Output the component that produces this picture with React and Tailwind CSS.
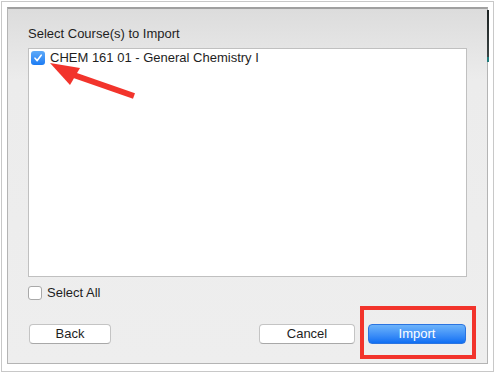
const COURSES = [{ id: 1, label: 'CHEM 161 01 - General Chemistry I', checked: true }];

function Check({ checked }) {
  if (checked) {
    return (
      <span className="flex h-[14px] w-[14px] items-center justify-center rounded-[3px] bg-gradient-to-b from-[#5eaaf8] to-[#1a7cf4]">
        <svg width="10" height="10" viewBox="0 0 10 10">
          <path d="M2 5.2 L4.2 7.6 L8.2 2.2" fill="none" stroke="#fff" strokeWidth="1.6" strokeLinecap="round" strokeLinejoin="round" />
        </svg>
      </span>
    );
  }
  return <span className="block h-[14px] w-[14px] rounded-[3px] border border-[#a9a9a9] bg-white" />;
}

export default function App() {
  return (
    <div
      className="relative h-[373px] w-[495px] overflow-hidden bg-white p-[1px] text-[13px] text-[#1e1e1e]"
      style={{ fontFamily: '"Liberation Sans", Arial, sans-serif' }}
    >
      <div className="h-[371px] w-[493px] border border-[#c8c8c8] px-[5px] pt-[5px]">
        <div className="flex h-[357px] w-[481px] flex-col border border-t-2 border-[#b4b4b4] border-t-[#a0a0a0] bg-gradient-to-b from-[#dcdcdc] via-[#ececec] via-20% to-[#eeeeee]">
          <div className="px-[20px] pt-[17px] leading-[16px]">Select Course(s) to Import</div>

          <div className="mx-[20px] mt-[6px] h-[229px] border border-[#c0c0c0] bg-white pl-[2px] pt-[2px]">
            {COURSES.map((c) => (
              <div key={c.id} className="flex h-[14px] items-center gap-[5px]">
                <Check checked={c.checked} />
                <span className="leading-[14px]">{c.label}</span>
              </div>
            ))}
          </div>

          <div className="ml-[20px] mt-[9px] flex items-center gap-[5px]">
            <Check checked={false} />
            <span className="leading-[14px]">Select All</span>
          </div>

          <div className="mt-[24px] flex items-center px-[21px]">
            <button className="h-[20px] w-[82px] rounded-[4px] border border-[#c4c4c4] border-b-[#a8a8a8] bg-white leading-[18px] text-[#1e1e1e]">
              Back
            </button>
            <div className="flex-1" />
            <button className="h-[20px] w-[96px] rounded-[4px] border border-[#c4c4c4] border-b-[#a8a8a8] bg-white leading-[18px] text-[#1e1e1e]">
              Cancel
            </button>
            <button className="ml-[13px] h-[20px] w-[98px] rounded-[4px] border border-[#2b74e0] bg-gradient-to-b from-[#6cb3fa] to-[#0d6ff3] leading-[18px] text-white">
              Import
            </button>
          </div>
        </div>
      </div>

      {/* window behind the sheet */}
      <div className="absolute left-[487px] top-[10px] h-[47px] w-[2px] bg-gradient-to-b from-[#1c2222] to-[#3b4444]" />
      <div className="absolute left-[487px] top-[57px] h-[5px] w-[2px] bg-[#1f7a7a]" />

      {/* annotation: highlight box */}
      <div className="absolute left-[360px] top-[306px] h-[53px] w-[116px] border-4 border-[#f2342c]" />

      {/* annotation: arrow */}
      <svg className="absolute left-0 top-0" width="495" height="373" viewBox="0 0 495 373">
        <line x1="134" y1="96" x2="68" y2="73" stroke="#f2342c" strokeWidth="6" />
        <polygon points="50,63 80,68 70,85" fill="#f2342c" />
      </svg>
    </div>
  );
}
